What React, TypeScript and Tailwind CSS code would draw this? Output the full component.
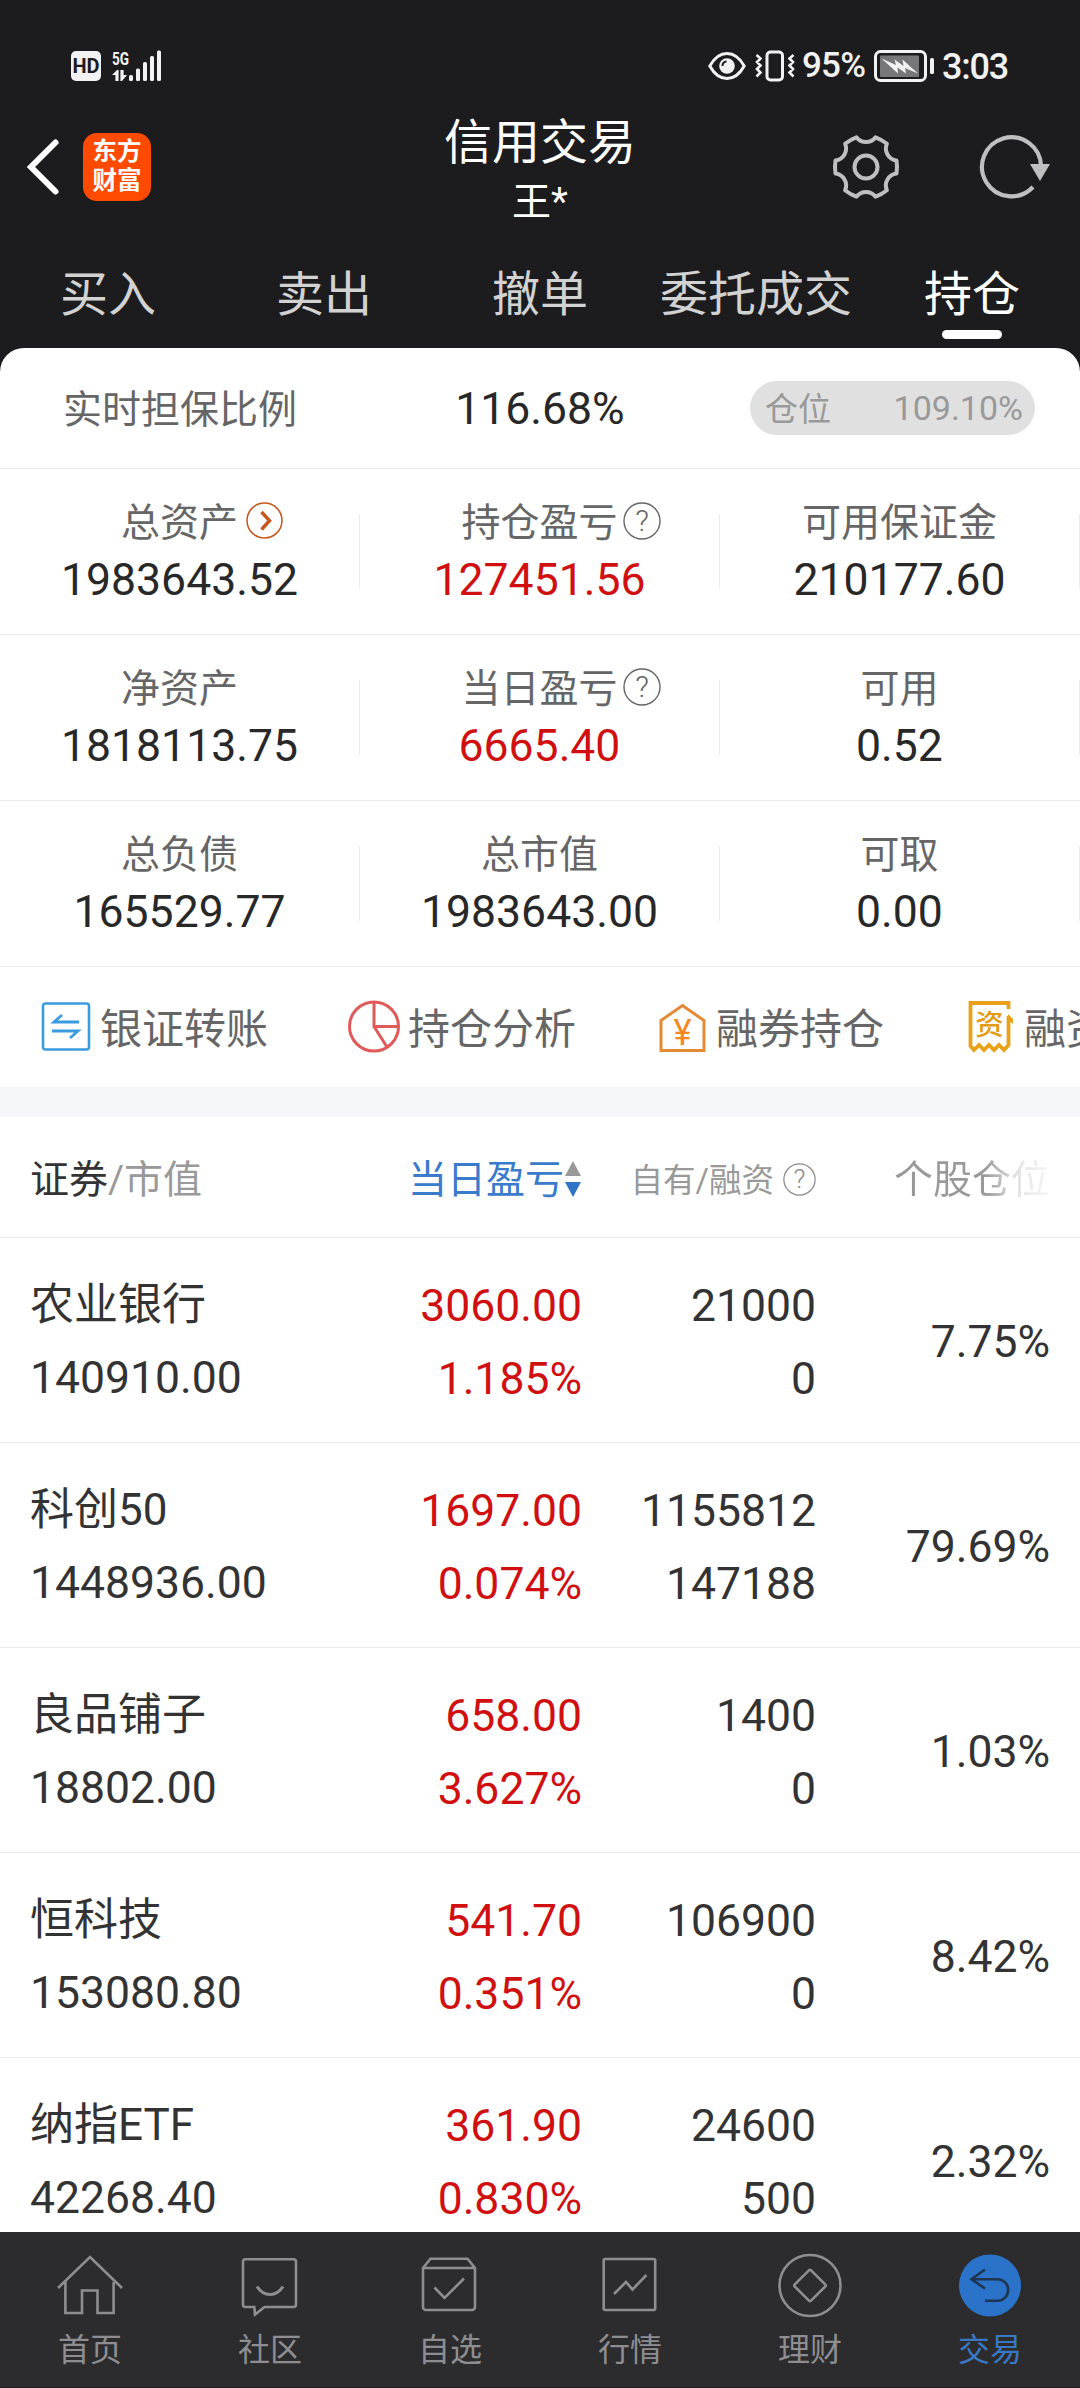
import { ReactNode } from "react";
import clsx from "clsx";

const tabs = ["买入", "卖出", "撤单", "委托成交", "持仓"];

type Metric = { label: string; value: string; red?: boolean; icon?: "go" | "help" };

const metrics: Metric[][] = [
    [
        { label: "总资产", value: "1983643.52", icon: "go" },
        { label: "持仓盈亏", value: "127451.56", red: true, icon: "help" },
        { label: "可用保证金", value: "210177.60" },
    ],
    [
        { label: "净资产", value: "1818113.75" },
        { label: "当日盈亏", value: "6665.40", red: true, icon: "help" },
        { label: "可用", value: "0.52" },
    ],
    [
        { label: "总负债", value: "165529.77" },
        { label: "总市值", value: "1983643.00" },
        { label: "可取", value: "0.00" },
    ],
];

const holdings = [
    { name: "农业银行", value: "140910.00", profit: "3060.00", rate: "1.185%", own: "21000", margin: "0", share: "7.75%" },
    { name: "科创50", value: "1448936.00", profit: "1697.00", rate: "0.074%", own: "1155812", margin: "147188", share: "79.69%" },
    { name: "良品铺子", value: "18802.00", profit: "658.00", rate: "3.627%", own: "1400", margin: "0", share: "1.03%" },
    { name: "恒科技", value: "153080.80", profit: "541.70", rate: "0.351%", own: "106900", margin: "0", share: "8.42%" },
    { name: "纳指ETF", value: "42268.40", profit: "361.90", rate: "0.830%", own: "24600", margin: "500", share: "2.32%" },
];

function HelpIcon({ size, color }: { size: number; color: string }) {
    return (
        <svg width={size} height={size} viewBox="0 0 38 38" fill="none" className="shrink-0">
            <circle cx="19" cy="19" r="18" stroke={color} strokeWidth="1.4" />
            <text x="19" y="29" textAnchor="middle" fontSize="30" fontWeight="300" fontFamily="Roboto" fill={color}>
                ?
            </text>
        </svg>
    );
}

function GoIcon() {
    return (
        <svg width="37" height="37" viewBox="0 0 37 37" fill="none" className="shrink-0" stroke="#c8561c">
            <circle cx="18.5" cy="18.5" r="17.5" strokeWidth="1.5" />
            <path d="M15.5 10l8 8.7-8 8.8" strokeWidth="3.4" />
        </svg>
    );
}

function StatusBar() {
    return (
        <div className="flex h-[100px] items-center pt-[31px] pl-[71px] text-[36px] font-medium text-[#f2f2f2]">
            <div className="flex h-[30px] w-[30px] items-center justify-center rounded-[5px] bg-[#f2f2f2] text-[20px] font-bold text-[#1c1c1e]">HD</div>
            <svg width="50" height="32" viewBox="0 0 50 32" className="ml-[11px] overflow-visible" fill="#f2f2f2">
                <text x="0" y="14.5" fontSize="19" fontWeight="700" fontFamily="Roboto" textLength="17" lengthAdjust="spacingAndGlyphs">
                    5G
                </text>
                <path d="M0 25l5-5h1.6v11H3.4v-6zM8.4 20h3.2v5H15l-5 6H8.4z" />
                <rect x="17" y="25" width="4" height="6" rx="1.5" />
                <rect x="24" y="18.5" width="4" height="12.5" rx="1.5" />
                <rect x="31" y="12" width="4" height="19" rx="1.5" />
                <rect x="38" y="6" width="4" height="25" rx="1.5" />
                <rect x="45" y="0.5" width="4" height="30.5" rx="1.5" />
            </svg>
            <svg width="38" height="30" viewBox="0 0 38 30" className="ml-[546px]" fill="none" stroke="#f2f2f2">
                <path d="M1.8 15C6.5 6.5 12.5 2.5 19 2.5S31.5 6.500 36.200 15C31.500 23.500 25.500 27.500 19 27.500S6.500 23.500 1.800 15z" strokeWidth="3" />
                <circle cx="19" cy="15" r="7.8" fill="#f2f2f2" stroke="none" />
                <path d="M14.5 15a4.5 4.5 0 0 1 4-4.5" stroke="#1c1c1e" strokeWidth="2" />
            </svg>
            <svg width="42" height="32" viewBox="0 0 42 32" className="ml-[8px]" fill="none" stroke="#f2f2f2" strokeWidth="3">
                <rect x="13" y="2" width="15.5" height="28" rx="3.5" />
                <path d="M2.5 5l4 3.5-3.5 3.5 3.5 3.500-3.500 3.500 3.500 3.500-4 4M39.500 5l-4 3.500 3.500 3.500-3.500 3.500 3.500 3.500-3.500 3.500 4 4" strokeWidth="2.6" />
            </svg>
            <span className="ml-[6px] w-[72px] pt-[2px] text-[35px] tracking-[-0.8px]">95%</span>
            <svg width="61" height="32" viewBox="0 0 61 32" fill="none">
                <rect x="1.5" y="1.5" width="50" height="29" rx="5" stroke="#f2f2f2" strokeWidth="3" />
                <rect x="6" y="5.5" width="39" height="21.5" rx="1" fill="#777779" />
                <path d="M7.500 8.500l14.500 6.500-1.500-5.500 9 6.500-1-6.500L44 23.500l-13-5.500 1 5.500-8.500-6 .5 6z" fill="#f2f2f2" />
                <rect x="56" y="8" width="4" height="16" rx="1.5" fill="#f2f2f2" />
            </svg>
            <span className="ml-[7px] pt-[2px] text-[36px] tracking-[-1.2px]">3:03</span>
        </div>
    );
}

function Header() {
    return (
        <div className="grid h-[134px] grid-cols-[1fr_auto_1fr] items-center text-white">
            <div className="flex items-center pl-[26px]">
                <svg width="34" height="58" viewBox="0 0 34 58" fill="none" stroke="#fff" strokeWidth="6" strokeLinecap="round">
                    <path d="M29.5 4.5L5 29l24.5 24.5" />
                </svg>
                <div className="ml-[23px] flex h-[68px] w-[68px] flex-col items-center rounded-[14px] bg-[#ff4a00] pt-[4px] text-[24.5px] leading-[29px] font-bold">
                    <span>东方</span>
                    <span>财富</span>
                </div>
            </div>
            <div className="flex flex-col items-center pt-[9px]">
                <h1 className="text-5xl leading-[60px]">信用交易</h1>
                <p className="text-[39px] leading-[58px]">王*</p>
            </div>
            <div className="flex items-center justify-end gap-[78px] pr-[28px]">
                <svg width="68" height="68" viewBox="-34 -34 68 68" fill="none" stroke="#bfbfbf" strokeWidth="4" strokeLinejoin="round">
                    <path d="M30.5 -6.5Q31.5 0 30.5 6.5A12 12 0 0 0 20.9 23.2Q15.5 27.5 9.6 29.7A12 12 0 0 0 -9.6 29.7Q-15.5 27.5 -20.9 23.2A12 12 0 0 0 -30.5 6.5Q-31.5 0 -30.5 -6.5A12 12 0 0 0 -20.9 -23.2Q-15.5 -27.5 -9.6 -29.7A12 12 0 0 0 9.6 -29.7Q15.5 -27.5 20.9 -23.2A12 12 0 0 0 30.5 -6.5z" />
                    <circle r="11.5" />
                </svg>
                <svg width="74" height="68" viewBox="0 0 74 68" fill="none" stroke="#bfbfbf">
                    <path d="M63 33A29.5 29.5 0 1 0 55 54" strokeWidth="4.2" />
                    <path d="M52 31h20l-10 17z" fill="#bfbfbf" stroke="none" />
                </svg>
            </div>
        </div>
    );
}

function MetricCell({ label, value, red, icon }: Metric) {
    return (
        <div className="flex items-center">
            <div className="flex-1 self-start pt-[26px]">
                <div className="grid h-[57px] grid-cols-[1fr_auto_1fr] items-center text-[39px] leading-[57px] text-[#666]">
                    <span />
                    <span>{label}</span>
                    {icon === "go" && <span className="pb-[7px] pl-[8px]"><GoIcon /></span>}
                    {icon === "help" && <span className="pb-[6px] pl-[5px]"><HelpIcon size={38} color="#666" /></span>}
                </div>
                <p className={clsx("text-center text-[44.5px] leading-[57px]", red ? "text-[#d01010]" : "text-[#282828]")}>{value}</p>
            </div>
            <div className="h-[75px] w-px bg-[#ebebeb]" />
        </div>
    );
}

function Action({ label, children }: { label: string; children: ReactNode }) {
    return (
        <div className="flex shrink-0 items-center gap-[7px]">
            <svg width="54" height="54" viewBox="0 0 54 54" fill="none">
                {children}
            </svg>
            <span className="pt-[4px] text-[42px] whitespace-nowrap text-[#666]">{label}</span>
        </div>
    );
}

function Actions() {
    return (
        <div className="flex h-[120px] items-center gap-[79px] overflow-hidden pl-[39px]">
            <Action label="银证转账">
                <g stroke="#3b9be0">
                    <rect x="4" y="3.5" width="46" height="46" rx="2.5" strokeWidth="2.6" />
                    <path d="M40 22H15l8-7M13 31h26l-8 7" strokeWidth="2.8" />
                </g>
            </Action>
            <Action label="持仓分析">
                <g stroke="#e05a5a" strokeWidth="3">
                    <circle cx="27" cy="26.5" r="24.5" />
                    <path d="M27 2v24.5h24.5M27 26.5L40 47" />
                </g>
            </Action>
            <Action label="融券持仓">
                <path d="M6 50.5V20.5L27.5 5.500 49 20.500v30z" stroke="#e48a35" strokeWidth="3" />
                <text x="27.5" y="45" textAnchor="middle" fontSize="36" fontFamily="Roboto" fill="#f5871f" textLength="18" lengthAdjust="spacingAndGlyphs">
                    ¥
                </text>
            </Action>
            <Action label="融资持仓">
                <path d="M45.5 9V3H7.500v43l3.500 4 5-5 5 5 5-5 5 5 5-5 5 5 4.500-5V16" stroke="#eaa11a" strokeWidth="3.8" />
                <path d="M45 14l5 5v5l-5-4z" fill="#eaa11a" />
                <text x="26.5" y="34.5" textAnchor="middle" fontSize="28.5" fontWeight="500" fontFamily="Noto Sans CJK SC" fill="#e39a14">
                    资
                </text>
            </Action>
        </div>
    );
}

const columns = "grid grid-cols-[322px_230px_234px_1fr] items-center border-b border-[#ebebeb] px-[30px]";

function Holdings() {
    return (
        <div>
            <div className={clsx(columns, "h-[121px] pt-[4px] text-[39px] text-[#999]")}>
                <div className="pt-[3px]">
                    <span className="text-[#333]">证券</span>/市值
                </div>
                <div className="flex items-center justify-end text-[#3a7bcb]">
                    <span className="pt-[3px]">当日盈亏</span>
                    <svg width="16" height="36" viewBox="0 0 16 36" className="ml-px mr-px">
                        <path d="M8 0l8 15H0z" fill="#999" />
                        <path d="M8 36l8-15H0z" fill="#2f74c5" />
                    </svg>
                </div>
                <div className="flex items-center justify-end gap-[9px] text-[32.5px] whitespace-nowrap">
                    <span className="pt-[4px]">自有/融资</span>
                    <HelpIcon size={33} color="#888" />
                </div>
                <div className="pt-[3px] text-right">
                    <span className="bg-linear-to-r from-[#999] from-58% via-[#e2e2e2] via-78% to-[#f7f7f7] bg-clip-text text-transparent">个股仓位</span>
                </div>
            </div>
            {holdings.map((row) => (
                <div key={row.name} className={clsx(columns, "h-[205px] text-right text-[44.5px] leading-[73px] text-[#333]")}>
                    <div className="pt-[4px] text-left">
                        <p className="text-[44px]">{row.name}</p>
                        <p>{row.value}</p>
                    </div>
                    <div className="pt-[6px] text-[#d01010]">
                        <p>{row.profit}</p>
                        <p>{row.rate}</p>
                    </div>
                    <div className="pt-[6px]">
                        <p>{row.own}</p>
                        <p>{row.margin}</p>
                    </div>
                    <p className="pt-[5px]">{row.share}</p>
                </div>
            ))}
        </div>
    );
}

function NavItem({ label, active, children }: { label: string; active?: boolean; children: ReactNode }) {
    return (
        <div className={clsx("flex flex-col items-center", active ? "text-[#3a78c4]" : "text-[#8e8e92]")}>
            <svg width="66" height="66" viewBox="0 0 66 66" fill="none" stroke="currentColor" strokeWidth="2.6">
                {children}
            </svg>
            <span className="text-[32px] leading-[64px]">{label}</span>
        </div>
    );
}

function BottomNav() {
    return (
        <nav className="grid h-[156px] shrink-0 grid-cols-6 border-b border-[#211f20] bg-[#2c2c2e] pt-5">
            <NavItem label="首页">
                <path d="M1 36L33 5l32 31M8.4 30v31H25V38.5h15.5V61h16.1V30" />
            </NavItem>
            <NavItem label="社区">
                <path d="M8.5 7.3h48a2.5 2.5 0 0 1 2.5 2.5v42.7a2.5 2.5 0 0 1-2.5 2.5H27.5l-9.5 7.5-.7-7.5H8.5a2.5 2.5 0 0 1-2.5-2.5V9.8a2.5 2.5 0 0 1 2.5-2.5z" />
                <path d="M20 34.5q5 8 13 8t13-8" strokeWidth="3" />
            </NavItem>
            <NavItem label="自选">
                <path d="M6 16l7.5-9.3h37L58 16v39a3 3 0 0 1-3 3H9a3 3 0 0 1-3-3zM6 16h52M17.5 35.5l10 10.5L47 26.5" />
            </NavItem>
            <NavItem label="行情">
                <rect x="6.7" y="7" width="51.5" height="51" rx="1.5" />
                <path d="M17 42l12-12 6.5 7.5L49.5 23" />
            </NavItem>
            <NavItem label="理财">
                <circle cx="33" cy="33.5" r="30.5" />
                <rect x="21.5" y="22" width="23" height="23" rx="1.5" transform="rotate(45 33 33.5)" />
            </NavItem>
            <NavItem label="交易" active>
                <circle cx="33" cy="33.5" r="31" fill="#2b73c8" stroke="none" />
                <path d="M28 17.5L14.5 27.3 28 36.5M15 27.3h25.5a10.7 10.7 0 0 1 0 21.4H28" stroke="#1d3654" />
            </NavItem>
        </nav>
    );
}

export default function App() {
    return (
        <div className="flex h-[2388px] w-[1080px] flex-col overflow-hidden bg-[#1c1c1e] font-[Roboto,'Noto_Sans_CJK_SC',sans-serif]">
            <StatusBar />
            <Header />
            <div className="grid h-[114px] shrink-0 grid-cols-5">
                {tabs.map((tab, i) => (
                    <div key={tab} className={clsx("flex flex-col items-center pt-[31px] text-5xl leading-[60px]", i === 4 ? "text-white" : "text-[#d2d2d2]")}>
                        <span>{tab}</span>
                        {i === 4 && <div className="mt-[5px] h-[9px] w-[60px] rounded-full bg-white" />}
                    </div>
                ))}
            </div>
            <main className="min-h-0 flex-1 overflow-hidden rounded-t-[24px] bg-white">
                <div className="grid h-[121px] grid-cols-3 items-center border-b border-[#ebebeb]">
                    <span className="pt-[5px] text-center text-[39px] text-[#666]">实时担保比例</span>
                    <span className="pt-[3px] text-center text-[44.5px] text-[#282828]">116.68%</span>
                    <div className="flex justify-end pr-[45px]">
                        <div className="flex h-[54px] w-[285px] items-center justify-between rounded-full bg-[#e0e0e0] pr-[12px] pl-[15px] text-[33px] text-[#999]">
                            <span className="pt-[3px]">仓位</span>
                            <span className="pt-[1px] text-[34px]">109.10%</span>
                        </div>
                    </div>
                </div>
                {metrics.map((row) => (
                    <div key={row[0].label} className="grid h-[166px] grid-cols-3 border-b border-[#ebebeb]">
                        {row.map((metric) => (
                            <MetricCell key={metric.label} {...metric} />
                        ))}
                    </div>
                ))}
                <Actions />
                <div className="h-[30px] bg-[#f5f7fa]" />
                <Holdings />
            </main>
            <BottomNav />
        </div>
    );
}
